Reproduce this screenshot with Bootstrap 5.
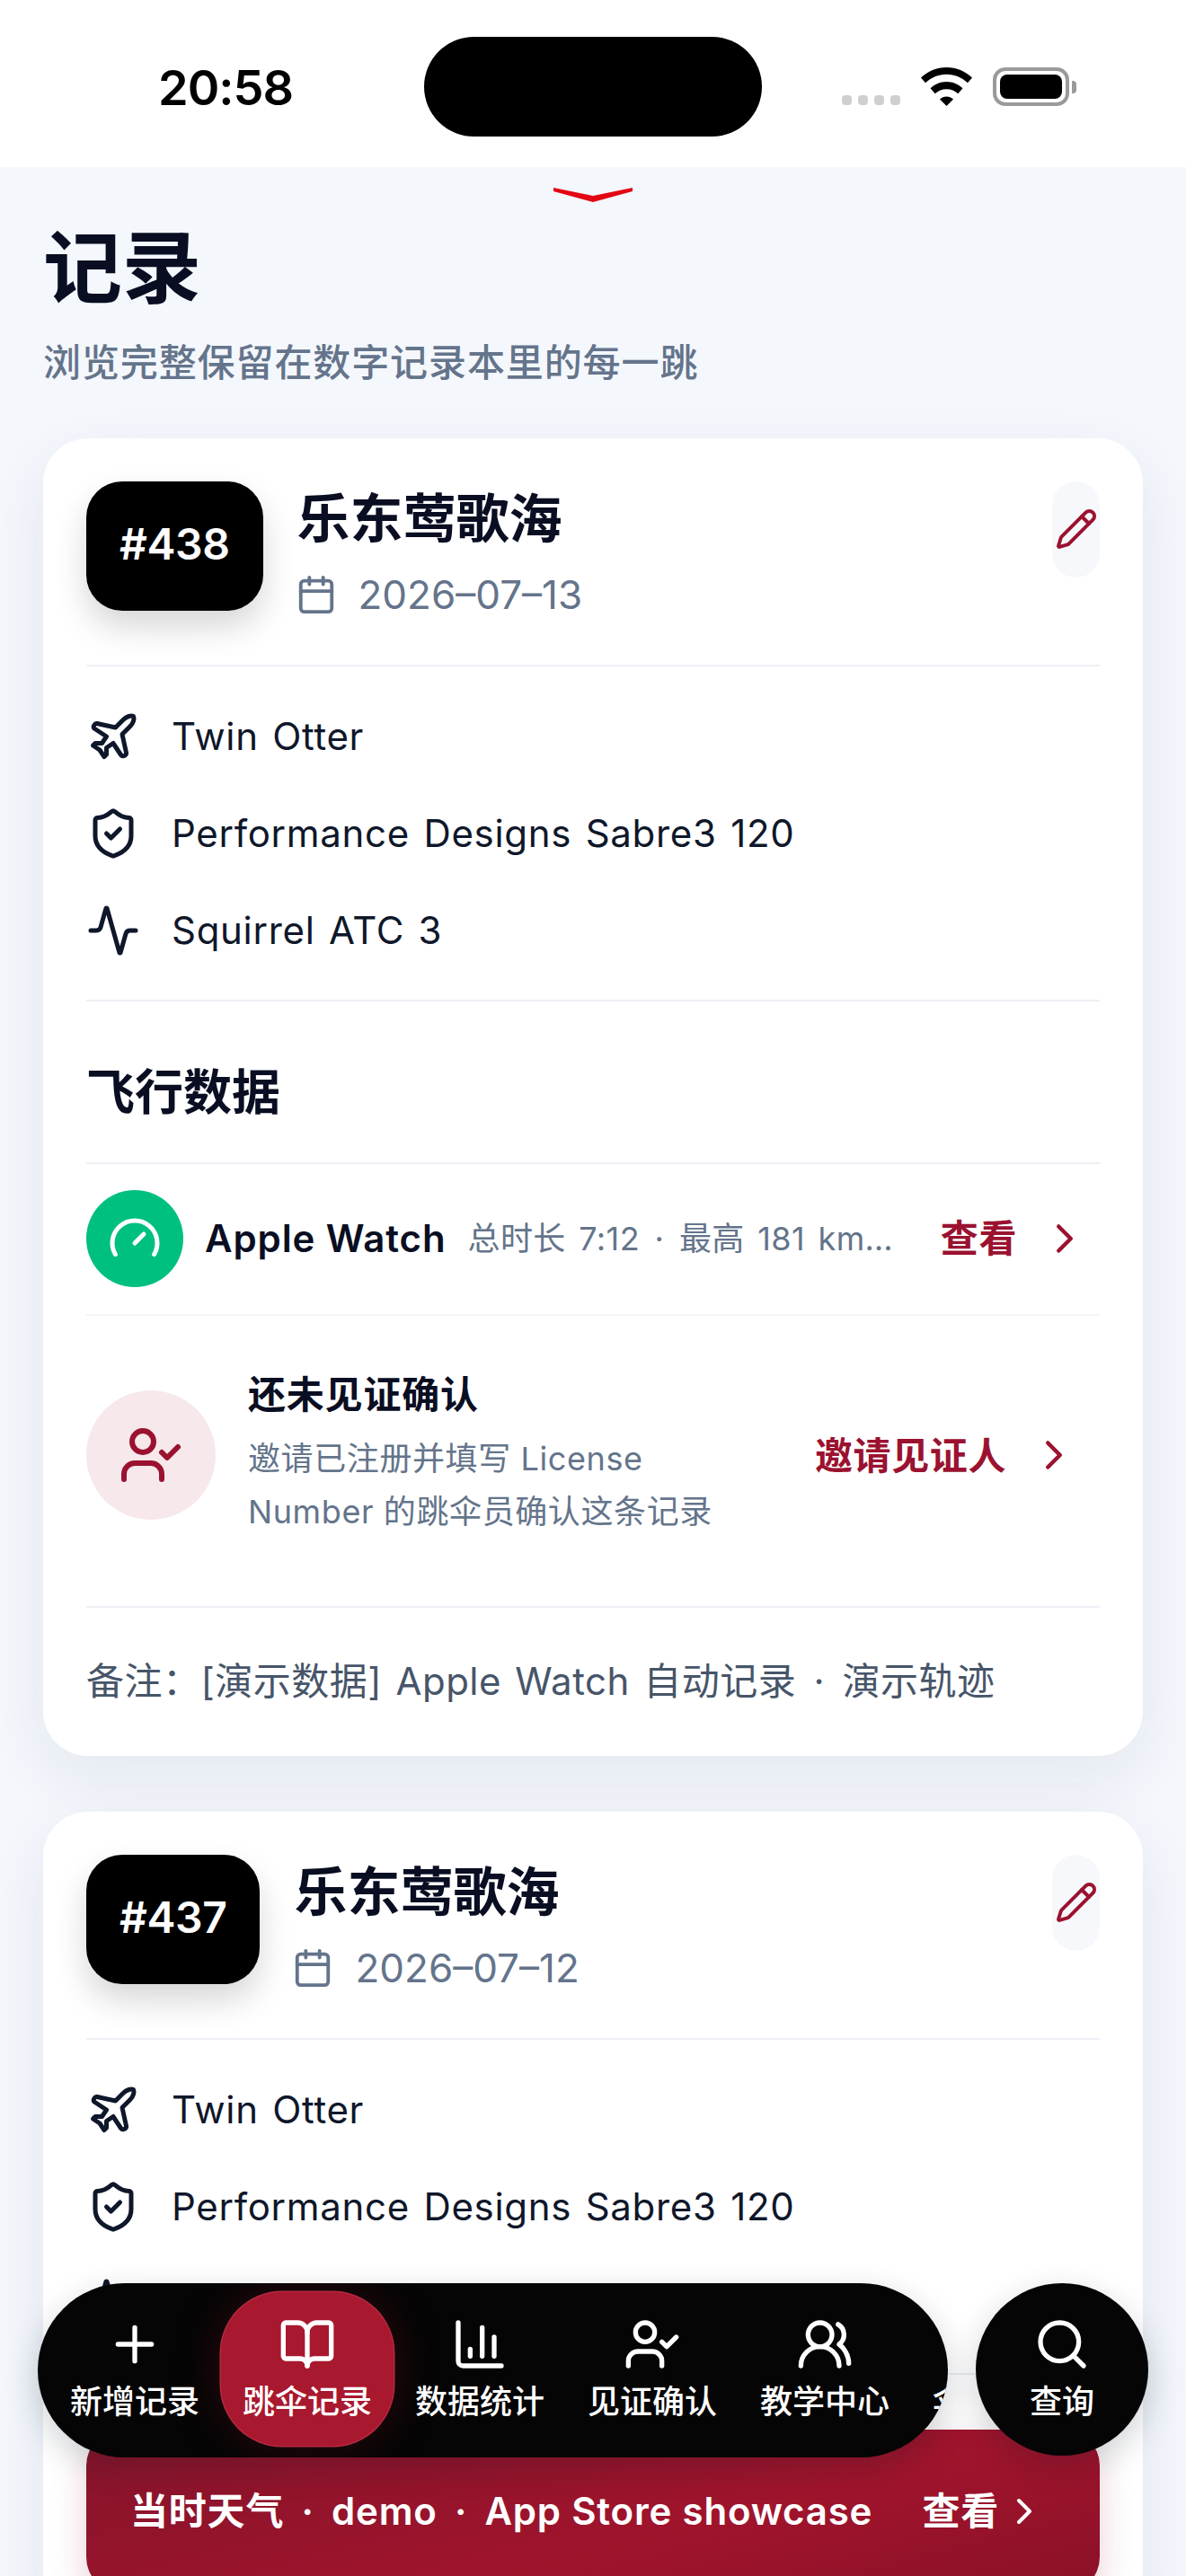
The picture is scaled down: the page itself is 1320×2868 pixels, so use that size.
<!DOCTYPE html>
<html lang="zh-CN">
<head>
<meta charset="UTF-8" />
<title>记录</title>
<meta name="viewport" content="width=device-width, initial-scale=1" />
<link href="https://cdn.jsdelivr.net/npm/bootstrap@5.3.0/dist/css/bootstrap.min.css" rel="stylesheet" />
<style>
  html, body { height: 2868px; overflow: hidden; }
  body { position: relative; font-family: Inter, "Noto Sans CJK SC", sans-serif; background: #f4f7fc; color: #0f172a; }
  svg.ico { fill: none; stroke: currentColor; stroke-width: 2; stroke-linecap: round; stroke-linejoin: round; flex-shrink: 0; display: block; }
  .mid-dot { padding: 0 .46em; }

  .status-bar { height: 186px; background: #fff; }
  .status-time { width: 472px; padding-left: 176px; font-size: 54px; font-weight: 600; letter-spacing: -1px; color: #000; line-height: 1; padding-top: 71px; }
  .island { width: 376px; height: 111px; margin-top: 41px; border-radius: 56px; background: #000; }
  .status-right { padding: 75px 0 0 89px; gap: 23px; }
  .sig-dots { gap: 7px; padding-top: 31px; }
  .sig-dots i { display: block; width: 11px; height: 11px; border-radius: 4px; background: #cfcfcf; }
  .batt { width: 85px; height: 43px; border: 4px solid #9a9a9a; border-radius: 14px; padding: 4px; position: relative; }
  .batt::before { content: ""; display: block; height: 100%; background: #000; border-radius: 8px; }
  .batt::after { content: ""; position: absolute; right: -12px; top: 11px; width: 5px; height: 14px; background: #9a9a9a; border-radius: 0 4px 4px 0; }

  .pull-mark { display: block; margin: 23px auto 0; }
  .page-head { padding: 21px 48px 0; }
  .page-title { font-size: 88px; font-weight: 700; line-height: 1.2; color: #0a0e22; margin: 0; }
  .page-sub { font-size: 42px; font-weight: 500; letter-spacing: .9px; color: #64748b; line-height: 50px; margin-top: 27px; }

  .jump-card { margin: 59px 48px 0; padding: 48px; border: 0; border-radius: 50px; box-shadow: 0 24px 72px rgba(30, 50, 90, .08); }
  .jump-card + .jump-card { margin-top: 62px; }
  .jump-head { height: 144px; }
  .num-tag { height: 144px; padding: 0 37px 3px; border-radius: 40px; background: #000; color: #fff; font-size: 48px; font-weight: 600; letter-spacing: -.4px; box-shadow: 0 18px 36px rgba(0, 0, 0, .16); }
  .head-text { padding-left: 38px; }
  .jump-title { font-size: 59px; font-weight: 700; line-height: 72px; color: #0a0e22; margin: 0; padding-top: 6px; }
  .jump-date { color: #64748b; font-size: 44px; line-height: 46px; gap: 24px; margin-top: 25px; }
  .jump-date svg { margin-left: -2px; }
  .edit-btn { width: 53px; height: 107px; border-radius: 27px; background: #f7f8fb; color: #9b1230; }
  .line-top { border-top: 2px solid #eceff5; }
  .gear-list { margin-top: 60px; padding: 48px 0 47px; gap: 48px; }
  .gear-row { gap: 35px; font-size: 42px; line-height: 60px; letter-spacing: .7px; word-spacing: 3px; color: #0f172a; }
  .sec-title { font-size: 54px; font-weight: 700; line-height: 155px; padding-top: 24px; margin: 0; color: #0a0e22; }
  .track-row { padding: 29px 0 30px; gap: 24px; }
  .track-icon { width: 108px; height: 108px; background: #00c07f; color: #fff; }
  .track-name { font-size: 42px; font-weight: 600; color: #0a0e22; white-space: nowrap; letter-spacing: .9px; }
  .track-info { font-size: 36px; letter-spacing: .4px; word-spacing: 4px; color: #64748b; white-space: nowrap; overflow: hidden; text-overflow: ellipsis; }
  .act-link { color: #9b1230; font-size: 42px; font-weight: 700; letter-spacing: .6px; white-space: nowrap; gap: 26px; }
  .act-view { padding: 0 12px 0 26px; }
  .act-invite { padding-right: 24px; }
  .wit-row { height: 325px; gap: 36px; padding-bottom: 12px; border-top: 2px solid #f3f5f8; }
  .wit-icon { width: 144px; height: 144px; background: #f6e8eb; color: #9b1230; }
  .wit-title { font-size: 42px; font-weight: 700; letter-spacing: .8px; color: #0a0e22; line-height: 50px; margin-bottom: 17px; }
  .wit-desc { font-size: 36px; letter-spacing: .6px; line-height: 59px; color: #64748b; }
  .note-line { font-size: 42px; color: #475569; padding: 57px 0 10px; line-height: 50px; letter-spacing: .5px; word-spacing: 3px; }
  .weather-bar { margin-top: 61px; padding: 62px 60px 62px 49px; border-radius: 40px; background: linear-gradient(165deg, #85142b 0%, #a0142c 60%, #8a1128 100%); color: #fff; font-size: 42px; font-weight: 600; line-height: 58px; letter-spacing: .8px; white-space: nowrap; box-shadow: 0 18px 40px rgba(155, 18, 48, .2); }

  .dock { position: absolute; left: 42px; top: 2542px; width: 1013px; height: 194px; border-radius: 97px; background: #050505; padding: 10px 12px; overflow: hidden; box-shadow: 0 12px 36px rgba(15, 23, 42, .2); }
  .dock-item { flex: 0 0 192px; height: 171px; border-radius: 68px; color: #fff; font-size: 36px; font-weight: 500; line-height: 44px; white-space: nowrap; padding-top: 26px; }
  .dock-item.on { background: #a8182e; box-shadow: 0 0 0 1.5px #b52a40, 0 0 50px rgba(168, 24, 46, .25); }
  .dock-search { position: absolute; left: 1086px; top: 2542px; width: 192px; height: 192px; background: #050505; color: #fff; font-size: 36px; font-weight: 500; line-height: 44px; padding-top: 36px; box-shadow: 0 12px 36px rgba(15, 23, 42, .2); }
  .dock-gap { height: 10px; }
</style>
</head>
<body>
  <!-- status bar -->
  <div class="status-bar d-flex">
    <div class="status-time">20:58</div>
    <div class="island"></div>
    <div class="status-right d-flex align-items-start">
      <div class="sig-dots d-flex"><i></i><i></i><i></i><i></i></div>
      <svg width="57" height="43" viewBox="0 0 57 43"><path d="M28.500 0C17.500 0 7.500 4.300 0 11.500l5 5.800C11.200 11.300 19.500 7.700 28.500 7.700s17.300 3.600 23.500 9.600l5-5.800C49.500 4.300 39.500 0 28.500 0zM10.500 23.300l5.200 6c3.400-3.200 8-5.100 12.800-5.100s9.400 1.900 12.800 5.100l5.200-6c-4.800-4.500-11.200-7.300-18-7.300s-13.200 2.800-18 7.300zM21 35.400 28.500 43 36 35.400c-2-1.900-4.700-3-7.500-3s-5.500 1.100-7.500 3z" fill="#000"/></svg>
      <div class="batt"></div>
    </div>
  </div>

  <svg class="pull-mark" width="88" height="16" viewBox="0 0 88 16"><path d="M0 0 L0 4 L44 16 L88 4 L88 0 L44 9z" fill="#e30613"/></svg>

  <div class="page-head">
    <h1 class="page-title">记录</h1>
    <div class="page-sub">浏览完整保留在数字记录本里的每一跳</div>
  </div>

  <!-- record 438 -->
  <div class="card jump-card">
    <div class="jump-head d-flex align-items-start">
      <div class="num-tag d-flex align-items-center justify-content-center">#438</div>
      <div class="head-text flex-grow-1">
        <h2 class="jump-title">乐东莺歌海</h2>
        <div class="jump-date d-flex align-items-center">
          <svg class="ico" width="46" height="46" viewBox="0 0 24 24"><path d="M8 2v4M16 2v4"/><rect x="3" y="4" width="18" height="18" rx="2"/><path d="M3 10h18"/></svg>
          <span>2026–07–13</span>
        </div>
      </div>
      <div class="edit-btn d-flex align-items-center justify-content-center">
        <svg class="ico" width="48" height="48" viewBox="0 0 24 24"><path d="M21.174 6.812a1 1 0 0 0-3.986-3.987L3.842 16.174a2 2 0 0 0-.5.83l-1.321 4.352a.5.5 0 0 0 .623.622l4.353-1.32a2 2 0 0 0 .83-.497z"/><path d="m15 5 4 4"/></svg>
      </div>
    </div>

    <div class="gear-list line-top d-flex flex-column">
      <div class="gear-row d-flex align-items-center">
        <svg class="ico" width="60" height="60" viewBox="0 0 24 24"><path d="M17.800 19.200 16 11l3.500-3.500C21 6 21.500 4 21 3c-1-.5-3 0-4.500 1.500L13 8 4.800 6.200c-.5-.1-.9.100-1.100.5l-.3.5c-.2.500-.1 1 .3 1.300L9 12l-2 3H4l-1 1 3 2 2 3 1-1v-3l3-2 3.500 5.300c.3.400.8.500 1.300.3l.5-.2c.4-.3.6-.7.5-1.200z"/></svg>
        <span>Twin Otter</span>
      </div>
      <div class="gear-row d-flex align-items-center">
        <svg class="ico" width="60" height="60" viewBox="0 0 24 24"><path d="M20 13c0 5-3.500 7.500-7.660 8.950a1 1 0 0 1-.67-.01C7.500 20.500 4 18 4 13V6a1 1 0 0 1 1-1c2 0 4.500-1.200 6.240-2.720a1.170 1.170 0 0 1 1.520 0C14.510 3.810 17 5 19 5a1 1 0 0 1 1 1z"/><path d="m9 12 2 2 4-4"/></svg>
        <span>Performance Designs Sabre3 120</span>
      </div>
      <div class="gear-row d-flex align-items-center">
        <svg class="ico" width="60" height="60" viewBox="0 0 24 24"><path d="M22 12h-2.480a2 2 0 0 0-1.930 1.460l-2.350 8.360a.25.25 0 0 1-.48 0L9.240 2.180a.25.25 0 0 0-.48 0l-2.350 8.360A2 2 0 0 1 4.490 12H2"/></svg>
        <span>Squirrel ATC 3</span>
      </div>
    </div>

    <div class="line-top"><h3 class="sec-title">飞行数据</h3></div>

    <div class="track-row line-top d-flex align-items-center">
      <div class="track-icon rounded-circle d-flex align-items-center justify-content-center flex-shrink-0">
        <svg class="ico" width="60" height="60" viewBox="0 0 24 24"><path d="m12 14 4-4"/><path d="M3.340 19a10 10 0 1 1 17.320 0"/></svg>
      </div>
      <div class="track-name">Apple Watch</div>
      <div class="track-info flex-grow-1">总时长 7:12<span class="mid-dot">·</span>最高 181 km/h<span class="mid-dot">·</span>开伞 1500 m</div>
      <div class="act-link act-view d-flex align-items-center">查看
        <svg class="ico" width="54" height="54" viewBox="0 0 24 24"><path d="m9 18 6-6-6-6"/></svg>
      </div>
    </div>

    <div class="wit-row d-flex align-items-center">
      <div class="wit-icon rounded-circle d-flex align-items-center justify-content-center flex-shrink-0">
        <svg class="ico" width="72" height="72" viewBox="0 0 24 24"><path d="M16 21v-2a4 4 0 0 0-4-4H6a4 4 0 0 0-4 4v2"/><circle cx="9" cy="7" r="4"/><path d="m16 11 2 2 4-4"/></svg>
      </div>
      <div class="flex-grow-1">
        <div class="wit-title">还未见证确认</div>
        <div class="wit-desc">邀请已注册并填写 License<br />Number 的跳伞员确认这条记录</div>
      </div>
      <div class="act-link act-invite d-flex align-items-center">邀请见证人
        <svg class="ico" width="54" height="54" viewBox="0 0 24 24"><path d="m9 18 6-6-6-6"/></svg>
      </div>
    </div>

    <div class="note-line line-top">备注：[演示数据] Apple Watch 自动记录<span class="mid-dot">·</span>演示轨迹</div>
  </div>

  <!-- record 437, runs off the bottom -->
  <div class="card jump-card">
    <div class="jump-head d-flex align-items-start">
      <div class="num-tag d-flex align-items-center justify-content-center">#437</div>
      <div class="head-text flex-grow-1">
        <h2 class="jump-title">乐东莺歌海</h2>
        <div class="jump-date d-flex align-items-center">
          <svg class="ico" width="46" height="46" viewBox="0 0 24 24"><path d="M8 2v4M16 2v4"/><rect x="3" y="4" width="18" height="18" rx="2"/><path d="M3 10h18"/></svg>
          <span>2026–07–12</span>
        </div>
      </div>
      <div class="edit-btn d-flex align-items-center justify-content-center">
        <svg class="ico" width="48" height="48" viewBox="0 0 24 24"><path d="M21.174 6.812a1 1 0 0 0-3.986-3.987L3.842 16.174a2 2 0 0 0-.5.83l-1.321 4.352a.5.5 0 0 0 .623.622l4.353-1.32a2 2 0 0 0 .83-.497z"/><path d="m15 5 4 4"/></svg>
      </div>
    </div>

    <div class="gear-list line-top d-flex flex-column">
      <div class="gear-row d-flex align-items-center">
        <svg class="ico" width="60" height="60" viewBox="0 0 24 24"><path d="M17.800 19.200 16 11l3.500-3.500C21 6 21.500 4 21 3c-1-.5-3 0-4.500 1.500L13 8 4.800 6.200c-.5-.1-.9.100-1.100.5l-.3.5c-.2.500-.1 1 .3 1.300L9 12l-2 3H4l-1 1 3 2 2 3 1-1v-3l3-2 3.500 5.300c.3.400.8.500 1.300.3l.5-.2c.4-.3.6-.7.5-1.200z"/></svg>
        <span>Twin Otter</span>
      </div>
      <div class="gear-row d-flex align-items-center">
        <svg class="ico" width="60" height="60" viewBox="0 0 24 24"><path d="M20 13c0 5-3.500 7.500-7.660 8.950a1 1 0 0 1-.67-.01C7.500 20.500 4 18 4 13V6a1 1 0 0 1 1-1c2 0 4.500-1.200 6.240-2.720a1.170 1.170 0 0 1 1.520 0C14.510 3.810 17 5 19 5a1 1 0 0 1 1 1z"/><path d="m9 12 2 2 4-4"/></svg>
        <span>Performance Designs Sabre3 120</span>
      </div>
      <div class="gear-row d-flex align-items-center">
        <svg class="ico" width="60" height="60" viewBox="0 0 24 24"><path d="M22 12h-2.480a2 2 0 0 0-1.930 1.460l-2.350 8.360a.25.25 0 0 1-.48 0L9.240 2.180a.25.25 0 0 0-.48 0l-2.350 8.360A2 2 0 0 1 4.490 12H2"/></svg>
        <span>Squirrel ATC 3</span>
      </div>
    </div>

    <div class="line-top">
      <div class="weather-bar d-flex align-items-center justify-content-between">
        <span>当时天气<span class="mid-dot">·</span>demo<span class="mid-dot">·</span>App Store showcase</span>
        <span class="d-flex align-items-center gap-1">查看
          <svg class="ico" width="48" height="48" viewBox="0 0 24 24"><path d="m9 18 6-6-6-6"/></svg>
        </span>
      </div>
    </div>
  </div>

  <!-- floating tab bar -->
  <div class="dock d-flex">
    <div class="dock-item d-flex flex-column align-items-center">
      <svg class="ico" width="64" height="64" viewBox="0 0 24 24"><path d="M5 12h14M12 5v14"/></svg>
      <span class="dock-gap"></span>新增记录
    </div>
    <div class="dock-item on d-flex flex-column align-items-center">
      <svg class="ico" width="64" height="64" viewBox="0 0 24 24"><path d="M12 7v14"/><path d="M3 18a1 1 0 0 1-1-1V4a1 1 0 0 1 1-1h5a4 4 0 0 1 4 4 4 4 0 0 1 4-4h5a1 1 0 0 1 1 1v13a1 1 0 0 1-1 1h-6a3 3 0 0 0-3 3 3 3 0 0 0-3-3z"/></svg>
      <span class="dock-gap"></span>跳伞记录
    </div>
    <div class="dock-item d-flex flex-column align-items-center">
      <svg class="ico" width="64" height="64" viewBox="0 0 24 24"><path d="M3 3v16a2 2 0 0 0 2 2h16"/><path d="M18 17V9M13 17V5M8 17v-3"/></svg>
      <span class="dock-gap"></span>数据统计
    </div>
    <div class="dock-item d-flex flex-column align-items-center">
      <svg class="ico" width="64" height="64" viewBox="0 0 24 24"><path d="M16 21v-2a4 4 0 0 0-4-4H6a4 4 0 0 0-4 4v2"/><circle cx="9" cy="7" r="4"/><path d="m16 11 2 2 4-4"/></svg>
      <span class="dock-gap"></span>见证确认
    </div>
    <div class="dock-item d-flex flex-column align-items-center">
      <svg class="ico" width="64" height="64" viewBox="0 0 24 24"><path d="M18 21a8 8 0 0 0-16 0"/><circle cx="10" cy="8" r="5"/><path d="M22 20c0-3.370-2-6.500-4-8a5 5 0 0 0-.45-8.300"/></svg>
      <span class="dock-gap"></span>教学中心
    </div>
    <div class="dock-item d-flex flex-column align-items-center">
      <span style="height:74px"></span>伞具管理
    </div>
  </div>
  <div class="dock-search rounded-circle d-flex flex-column align-items-center">
    <svg class="ico" width="64" height="64" viewBox="0 0 24 24"><circle cx="11" cy="11" r="8"/><path d="m21 21-4.300-4.300"/></svg>
    <span class="dock-gap"></span>查询
  </div>
</body>
</html>
